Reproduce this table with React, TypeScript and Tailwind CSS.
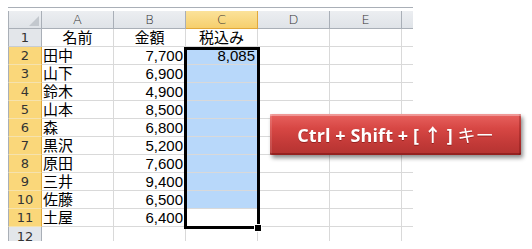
import React from 'react';

const cols = ['A', 'B', 'C', 'D', 'E'];

const rows: { name: string; amount: string; taxed?: string }[] = [
  { name: '田中', amount: '7,700', taxed: '8,085' },
  { name: '山下', amount: '6,900' },
  { name: '鈴木', amount: '4,900' },
  { name: '山本', amount: '8,500' },
  { name: '森', amount: '6,800' },
  { name: '黒沢', amount: '5,200' },
  { name: '原田', amount: '7,600' },
  { name: '三井', amount: '9,400' },
  { name: '佐藤', amount: '6,500' },
  { name: '土屋', amount: '6,400' },
];

const cellFont = "font-['Liberation_Sans','Noto_Sans_CJK_JP',sans-serif]";
const headFont = "font-['DejaVu_Sans','Noto_Sans_CJK_JP',sans-serif]";

function ColHeader({ label, active }: { label: string; active?: boolean }) {
  return (
    <div
      className={`h-[18px] border-r border-b flex items-center justify-center text-[13px] text-[#333] font-light ${headFont} ${
        active
          ? 'bg-[linear-gradient(#fbe29a,#f6cf6d)] border-r-[#e2a83a] border-b-[#e2a83a]'
          : 'bg-[linear-gradient(#eceef1,#dfe3e8)] border-r-[#a9afb7] border-b-[#a9afb7]'
      }`}
    >
      {label}
    </div>
  );
}

function RowHeader({ n, active }: { n: number; active?: boolean }) {
  return (
    <div
      className={`h-[18px] border-l border-l-[#a9afb7] border-r border-b flex items-center justify-center text-[13px] text-[#333] ${headFont} ${
        active
          ? 'bg-[#fad77a] border-r-[#e2a83a] border-b-[#f5e2ae]'
          : 'bg-[#e3e6ea] border-r-[#a9afb7] border-b-[#c7ccd2]'
      }`}
    >
      {n}
    </div>
  );
}

function Cell({ children, align = 'left', blue }: { children?: React.ReactNode; align?: 'left' | 'right' | 'center'; blue?: boolean }) {
  const justify = align === 'right' ? 'justify-end pr-[2px]' : align === 'center' ? 'justify-center' : 'justify-start pl-[1px]';
  return (
    <div
      className={`h-[18px] border-r border-b border-[#d9d9d9] flex items-center text-[15px] leading-none text-black ${cellFont} ${justify} ${
        blue ? 'bg-[#b8d8fa]' : 'bg-white'
      }`}
    >
      {children}
    </div>
  );
}

export default function App() {
  return (
    <div className="relative w-[532px] h-[249px] bg-white overflow-hidden">
      <div className="pt-[7px] pl-[8px]">
        <div className="w-[405px] h-px bg-[#a9afb7]" />
        <div className="h-[3px]" />
        <div className="grid grid-cols-[34px_72px_72px_72px_72px_72px_11px] w-[405px]">
          {/* corner + column headers */}
          <div className="relative h-[18px] border-l border-l-[#a9afb7] border-r border-b border-[#a9afb7] bg-[linear-gradient(#eceef1,#dfe3e8)]">
            <div className="absolute right-[2px] bottom-[2px] w-0 h-0 border-l-[10px] border-l-transparent border-b-[10px] border-b-[#c3c8ce]" />
          </div>
          {cols.map((c) => (
            <ColHeader key={c} label={c} active={c === 'C'} />
          ))}
          <div className="h-[18px] border-b border-[#a9afb7] bg-[linear-gradient(#eceef1,#dfe3e8)]" />

          {/* row 1 */}
          <RowHeader n={1} />
          <Cell align="center">名前</Cell>
          <Cell align="center">金額</Cell>
          <Cell align="center">税込み</Cell>
          <Cell />
          <Cell />
          <div className="h-[18px] border-b border-[#d9d9d9]" />

          {rows.map((r, i) => (
            <React.Fragment key={r.name}>
              <RowHeader n={i + 2} active />
              <Cell>{r.name}</Cell>
              <Cell align="right">{r.amount}</Cell>
              <Cell align="right" blue={i < rows.length - 1}>
                {r.taxed}
              </Cell>
              <Cell />
              <Cell />
              <div className="h-[18px] border-b border-[#d9d9d9]" />
            </React.Fragment>
          ))}

          {/* row 12, only its top shows */}
          <div className="h-[14px] overflow-hidden border-l border-l-[#a9afb7] border-r border-r-[#a9afb7] bg-[#e3e6ea] flex justify-center pt-[3px] text-[13px] text-[#333] leading-none">
            <span className={headFont}>12</span>
          </div>
          {[0, 1, 2, 3, 4].map((k) => (
            <div key={k} className="h-[14px] border-r border-[#d9d9d9]" />
          ))}
          <div className="h-[14px]" />
        </div>
      </div>

      {/* selection outline C2:C11 */}
      <div className="absolute left-[184px] top-[47px] w-[76px] h-[182px] border-[3px] border-black pointer-events-none" />
      <div className="absolute left-[255px] top-[225px] w-[6px] h-[6px] bg-black outline outline-1 outline-white" />

      {/* shortcut callout */}
      <div className="absolute left-[270px] top-[114px] w-[251px] h-[41px] flex items-center justify-center rounded-[1px] bg-[linear-gradient(#e8625f,#d74744_35%,#c33a38_70%,#b43331)] shadow-[2px_3px_4px_rgba(0,0,0,0.45),inset_0_2px_0_rgba(255,255,255,0.35),inset_0_-2px_0_rgba(90,0,0,0.35),inset_2px_0_0_rgba(255,255,255,0.12),inset_-2px_0_0_rgba(90,0,0,0.25)]">
        <span className="text-white text-[18px] font-bold font-['Open_Sans','Noto_Sans_CJK_JP',sans-serif] tracking-[0.1px] drop-shadow-[0_1px_0_rgba(80,0,0,0.4)] whitespace-nowrap">
          Ctrl + Shift + [ <span className="font-['Noto_Sans_CJK_JP',sans-serif] font-bold">↑</span> ] <span className="font-['Noto_Sans_CJK_JP',sans-serif] font-normal">キー</span>
        </span>
      </div>
    </div>
  );
}
